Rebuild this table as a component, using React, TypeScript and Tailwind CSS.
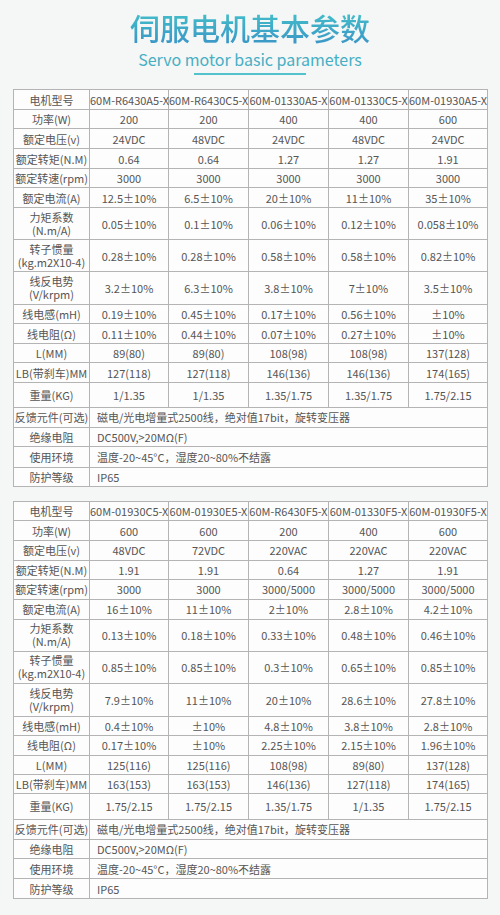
import React from 'react';

type Row = { label: React.ReactNode; values: string[]; h: number };

const pm = (v: string) => `${v}±10%`;

const twoLine = (a: string, b: string) => (
  <span className="block">
    <span className="block leading-[13px]">{a}</span>
    <span className="block leading-[13px]">{b}</span>
  </span>
);

const footer: { label: string; text: string; h: number }[] = [
  { label: '反馈元件(可选)', text: '磁电/光电增量式2500线，绝对值17bit，旋转变压器', h: 20 },
  { label: '绝缘电阻', text: 'DC500V,>20MΩ(F)', h: 19.6 },
  { label: '使用环境', text: '温度-20~45°C，湿度20~80%不结露', h: 20.2 },
  { label: '防护等级', text: 'IP65', h: 19.2 },
];

const table1: Row[] = [
  { label: '电机型号', values: ['60M-R6430A5-X', '60M-R6430C5-X', '60M-01330A5-X', '60M-01330C5-X', '60M-01930A5-X'], h: 20 },
  { label: '功率(W)', values: ['200', '200', '400', '400', '600'], h: 19.4 },
  { label: '额定电压(v)', values: ['24VDC', '48VDC', '24VDC', '48VDC', '24VDC'], h: 20 },
  { label: '额定转矩(N.M)', values: ['0.64', '0.64', '1.27', '1.27', '1.91'], h: 19.4 },
  { label: '额定转速(rpm)', values: ['3000', '3000', '3000', '3000', '3000'], h: 19.6 },
  { label: '额定电流(A)', values: ['12.5', '6.5', '20', '11', '35'].map(pm), h: 20 },
  { label: twoLine('力矩系数', '(N.m/A)'), values: ['0.05', '0.1', '0.06', '0.12', '0.058'].map(pm), h: 31.7 },
  { label: twoLine('转子惯量', '(kg.m2X10-4)'), values: ['0.28', '0.28', '0.58', '0.58', '0.82'].map(pm), h: 32.3 },
  { label: twoLine('线反电势', '(V/krpm)'), values: ['3.2', '6.3', '3.8', '7', '3.5'].map(pm), h: 32.7 },
  { label: '线电感(mH)', values: ['0.19±10%', '0.45±10%', '0.17±10%', '0.56±10%', '±10%'], h: 19.3 },
  { label: '线电阻(Ω)', values: ['0.11±10%', '0.44±10%', '0.07±10%', '0.27±10%', '±10%'], h: 20 },
  { label: 'L(MM)', values: ['89(80)', '89(80)', '108(98)', '108(98)', '137(128)'], h: 19 },
  { label: 'LB(带刹车)MM', values: ['127(118)', '127(118)', '146(136)', '146(136)', '174(165)'], h: 20 },
  { label: '重量(KG)', values: ['1/1.35', '1/1.35', '1.35/1.75', '1.35/1.75', '1.75/2.15'], h: 24.4 },
];

const table2: Row[] = [
  { label: '电机型号', values: ['60M-01930C5-X', '60M-01930E5-X', '60M-R6430F5-X', '60M-01330F5-X', '60M-01930F5-X'], h: 19.7 },
  { label: '功率(W)', values: ['600', '600', '200', '400', '600'], h: 19.3 },
  { label: '额定电压(v)', values: ['48VDC', '72VDC', '220VAC', '220VAC', '220VAC'], h: 20 },
  { label: '额定转矩(N.M)', values: ['1.91', '1.91', '0.64', '1.27', '1.91'], h: 19.3 },
  { label: '额定转速(rpm)', values: ['3000', '3000', '3000/5000', '3000/5000', '3000/5000'], h: 19.7 },
  { label: '额定电流(A)', values: ['16', '11', '2', '2.8', '4.2'].map(pm), h: 20 },
  { label: twoLine('力矩系数', '(N.m/A)'), values: ['0.13', '0.18', '0.33', '0.48', '0.46'].map(pm), h: 32 },
  { label: twoLine('转子惯量', '(kg.m2X10-4)'), values: ['0.85', '0.85', '0.3', '0.65', '0.85'].map(pm), h: 32.3 },
  { label: twoLine('线反电势', '(V/krpm)'), values: ['7.9', '11', '20', '28.6', '27.8'].map(pm), h: 32.7 },
  { label: '线电感(mH)', values: ['0.4±10%', '±10%', '4.8±10%', '3.8±10%', '2.8±10%'], h: 19 },
  { label: '线电阻(Ω)', values: ['0.17±10%', '±10%', '2.25±10%', '2.15±10%', '1.96±10%'], h: 20 },
  { label: 'L(MM)', values: ['125(116)', '125(116)', '108(98)', '89(80)', '137(128)'], h: 19.3 },
  { label: 'LB(带刹车)MM', values: ['163(153)', '163(153)', '146(136)', '127(118)', '174(165)'], h: 19 },
  { label: '重量(KG)', values: ['1.75/2.15', '1.75/2.15', '1.35/1.75', '1/1.35', '1.75/2.15'], h: 25.7 },
];

const cell = 'border border-[#b4b4b4] p-0 text-center align-middle whitespace-nowrap';

const SpecTable: React.FC<{ rows: Row[] }> = ({ rows }) => (
  <table className="w-[474px] table-fixed border-collapse bg-[#fdfdfd] text-[11px] leading-[14px] text-[#555]">
    <colgroup>
      <col className="w-[76px]" />
      <col className="w-[79px]" />
      <col className="w-[80px]" />
      <col className="w-[80px]" />
      <col className="w-[80px]" />
      <col className="w-[79px]" />
    </colgroup>
    <tbody>
      {rows.map((r, i) => (
        <tr key={i} style={{ height: r.h }}>
          <td className={cell}>{r.label}</td>
          {r.values.map((v, j) => (
            <td key={j} className={`${cell} overflow-visible`}>
              {v}
            </td>
          ))}
        </tr>
      ))}
      {footer.map((f, i) => (
        <tr key={`f${i}`} style={{ height: f.h }}>
          <td className={cell}>{f.label}</td>
          <td colSpan={5} className={`${cell} text-left pl-[7px]`}>
            {f.text}
          </td>
        </tr>
      ))}
    </tbody>
  </table>
);

export default function App() {
  return (
    <div
      className="w-[500px] h-[915px] bg-[#f5f6f6] overflow-hidden"
      style={{ fontFamily: '"Noto Sans CJK SC", "Noto Sans", sans-serif' }}
    >
      <div className="flex flex-col items-center pt-[8px]">
        <h1 className="text-[30px] leading-[38px] font-medium bg-gradient-to-b from-[#45c3c9] to-[#3a94c6] bg-clip-text text-transparent">
          伺服电机基本参数
        </h1>
        <p className="text-[16px] leading-[20px] text-[#46afc4] mt-[3px]">Servo motor basic parameters</p>
        <div className="w-[112px] h-[2px] bg-[#52c2cd] mt-[4px]" />
      </div>
      <div className="pl-[13px] pt-[14px]">
        <SpecTable rows={table1} />
        <div className="h-[14px]" />
        <SpecTable rows={table2} />
      </div>
    </div>
  );
}
